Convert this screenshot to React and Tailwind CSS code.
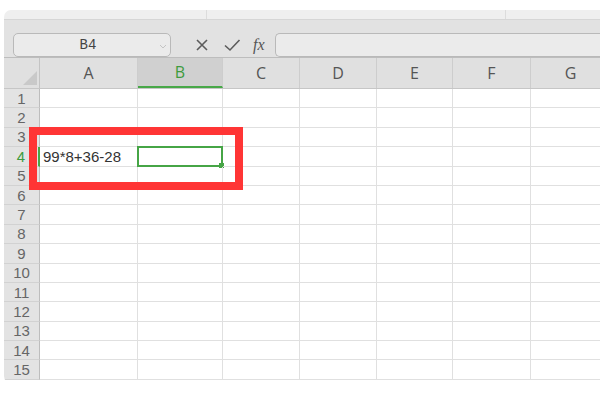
import React from 'react';

const cols = [
  { key: 'A', w: 98 },
  { key: 'B', w: 85 },
  { key: 'C', w: 77 },
  { key: 'D', w: 77 },
  { key: 'E', w: 76 },
  { key: 'F', w: 78 },
  { key: 'G', w: 80 },
];

const rows = Array.from({ length: 15 }, (_, i) => i + 1);

const font = { fontFamily: '"Liberation Sans", Arial, sans-serif' };

const Cell = ({ w, children, last }) => (
  <div
    className={`shrink-0 h-full border-b border-[#e0e0e0] ${last ? '' : 'border-r'} border-r-[#e0e0e0] relative`}
    style={{ width: w }}
  >
    {children}
  </div>
);

export default function App() {
  return (
    <div className="w-[600px] h-[400px] bg-white pt-[10px] pl-[4px] overflow-hidden relative" style={font}>
      <div className="h-[373px] rounded-l-[7px] overflow-hidden bg-white flex flex-col">
        {/* top strip */}
        <div className="h-[9px] bg-[#efefef] flex shrink-0">
          <div className="w-[203px] border-r border-[#dcdcdc]"></div>
          <div className="w-[299px] border-r border-[#dcdcdc]"></div>
        </div>

        {/* toolbar */}
        <div className="h-[39px] bg-[#e2e2e2] border-t border-[#d6d6d6] border-b border-b-[#bdbdbd] flex items-start pt-[13px] pl-[9px] shrink-0">
          <div className="w-[158px] h-[24px] rounded-[5px] border border-[#b9b9b9] bg-[#ebebeb] flex items-center relative">
            <span className="flex-1 text-center text-[14px] text-[#444] pr-[8px]" style={{ fontFamily: '"Liberation Mono", monospace' }}>B4</span>
            <svg width="8" height="5" viewBox="0 0 8 5" className="absolute right-[3px] top-[10px]">
              <path d="M1 1 L4 4 L7 1" fill="none" stroke="#c4c4c4" strokeWidth="1" />
            </svg>
          </div>
          <div className="flex items-center h-[24px] ml-[23px] gap-[13px] text-[#555]">
            <svg width="16" height="16" viewBox="0 0 16 16">
              <path d="M3 3 L13 13 M13 3 L3 13" stroke="#5c5c5c" strokeWidth="1.6" fill="none" />
            </svg>
            <svg width="18" height="16" viewBox="0 0 18 16">
              <path d="M2 8.5 L7 13 L16.5 3" stroke="#5c5c5c" strokeWidth="1.6" fill="none" />
            </svg>
            <span className="italic text-[16px] text-[#555] -ml-[1px]" style={{ fontFamily: '"Liberation Serif", serif' }}>fx</span>
          </div>
          <div className="ml-[10px] flex-1 h-[24px] rounded-l-[5px] border border-r-0 border-[#b9b9b9] bg-[#ebebeb]"></div>
        </div>

        {/* column header */}
        <div className="h-[31px] flex shrink-0 bg-[#e0e0e0] border-b border-[#c6c6c6]">
          <div className="w-[36px] shrink-0 h-full border-r border-[#c4c4c4] relative">
            <svg width="14" height="14" viewBox="0 0 14 14" className="absolute right-[2px] bottom-[3px]">
              <path d="M14 0 L14 14 L0 14 Z" fill="#c9c9c9" />
            </svg>
          </div>
          {cols.map((c) => {
            const sel = c.key === 'B';
            return (
              <div
                key={c.key}
                className={`shrink-0 h-full flex items-center justify-center text-[16px] leading-none border-r border-[#cdcdcd] ${
                  sel ? 'bg-[#d0d0d0] text-[#3e9b3e] border-b-2 border-b-[#48a848]' : 'text-[#555]'
                }`}
                style={{ width: c.w, fontFamily: '"Open Sans", "Liberation Sans", sans-serif' }}
              >
                {c.key}
              </div>
            );
          })}
        </div>

        {/* rows */}
        <div className="flex flex-col">
          {rows.map((r) => {
            const sel = r === 4;
            return (
              <div key={r} className="h-[19.4px] flex shrink-0">
                <div
                  className={`w-[36px] shrink-0 h-full flex items-center justify-center text-[15px] leading-none bg-[#e3e3e3] border-b border-[#d2d2d2] ${
                    sel ? 'text-[#3e9b3e] border-r-2 border-r-[#48a848]' : 'text-[#666] border-r border-r-[#bdbdbd]'
                  }`}
                >
                  {r}
                </div>
                {cols.map((c, i) => (
                  <Cell key={c.key} w={c.w} last={i === cols.length - 1}>
                    {sel && c.key === 'A' && (
                      <span className="absolute left-[3px] top-0 h-full flex items-center text-[15px] leading-none text-[#333] whitespace-nowrap">
                        99*8+36-28
                      </span>
                    )}
                    {sel && c.key === 'B' && (
                      <div className="absolute -left-[1px] -top-[1px] -right-[1px] -bottom-[1px] border-2 border-[#46a546]">
                        <div className="absolute -right-[3px] -bottom-[3px] w-[5px] h-[5px] bg-[#46a546]"></div>
                      </div>
                    )}
                  </Cell>
                ))}
              </div>
            );
          })}
        </div>
      </div>

      {/* red highlight frame */}
      <div className="absolute left-[29px] top-[127px] w-[214px] h-[63px] border-[8px] border-[#ff3535]"></div>
    </div>
  );
}
